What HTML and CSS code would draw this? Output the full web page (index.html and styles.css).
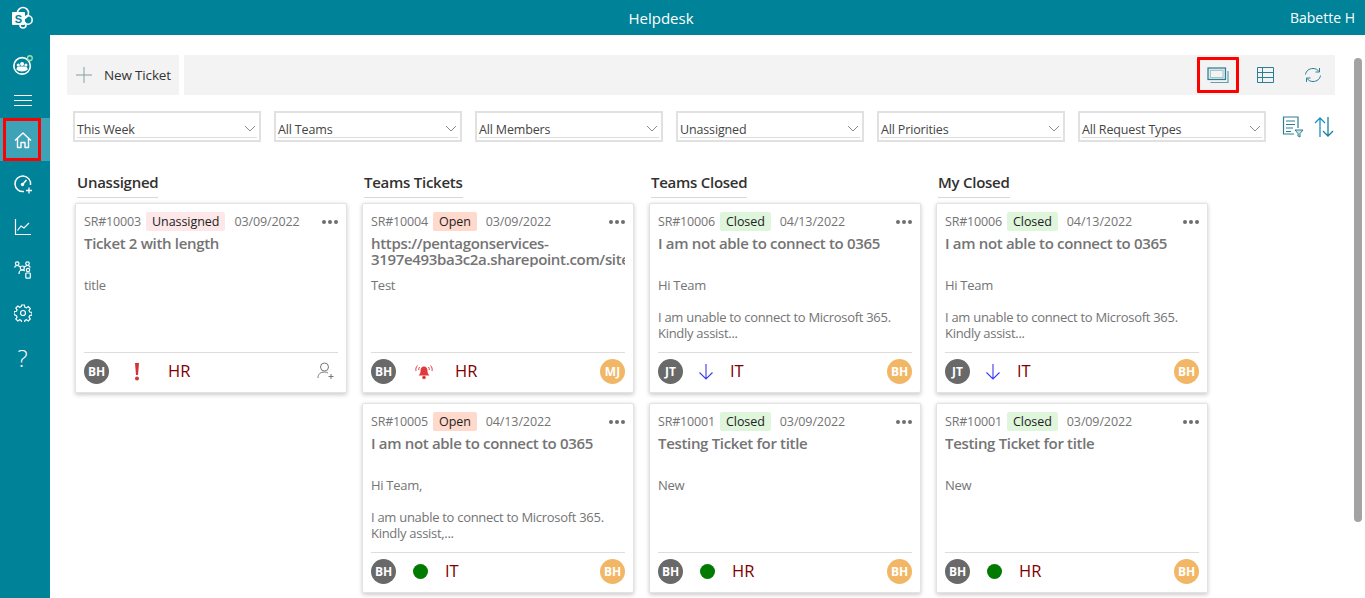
FILE: index.html
```html
<!DOCTYPE html>
<html lang="en">
<head>
<meta charset="utf-8">
<title>Helpdesk</title>
<link rel="stylesheet" href="styles.css">
</head>
<body>
<svg class="defs" width="0" height="0">
<defs>
<symbol id="more" viewBox="0 0 16 4"><circle cx="2" cy="2" r="2"/><circle cx="8" cy="2" r="2"/><circle cx="14" cy="2" r="2"/></symbol>
<symbol id="bang" viewBox="0 0 8 18"><path d="M2 0h4l-1 12H3z" fill="#d13438"/><circle cx="4" cy="15.500" r="2" fill="#d13438"/></symbol>
<symbol id="bell" viewBox="0 0 20 16"><path d="M10 2.500c-2.500 0-3.500 2-3.500 4.500 0 2-1 3.500-2 4.500h11c-1-1-2-2.500-2-4.500 0-2.500-1-4.500-3.500-4.500z" fill="#e03a3e"/><circle cx="10" cy="13.500" r="1.800" fill="#e03a3e"/><path d="M3.500 1.500C2 3 1.500 5 2 7M5.500 3C4.800 4 4.600 5 4.800 6M16.500 1.500C18 3 18.500 5 18 7M14.500 3c.7 1 .9 2 .7 3" fill="none" stroke="#e03a3e"/></symbol>
<symbol id="down" viewBox="0 0 16 18"><path d="M8 1v15M1.500 9.500 8 16l6.500-6.500" fill="none" stroke="#3b3bf0" stroke-width="1.100"/></symbol>
<symbol id="assign" viewBox="0 0 18 18"><circle cx="7.500" cy="5" r="4" fill="none" stroke="#777"/><path d="M1 16c0-4 2.500-6 6.500-6 1.500 0 2.500.3 3.500 1" fill="none" stroke="#777"/><path d="M14 12v5M11.500 14.500h5" stroke="#777" fill="none"/></symbol>
<symbol id="chev" viewBox="0 0 12 7"><path d="M1 1l5 5 5-5" fill="none" stroke="#8a8a8a"/></symbol>
</defs>
</svg>

<header class="topbar">
  <svg class="logo" viewBox="0 0 24 24" width="24" height="24"><circle cx="13" cy="7" r="5.500" fill="none" stroke="#fff" stroke-width="1.600"/><circle cx="18" cy="14" r="4.200" fill="none" stroke="#fff" stroke-width="1.600"/><circle cx="13" cy="19" r="3" fill="none" stroke="#fff" stroke-width="1.600"/><rect x="2" y="6" width="13" height="13" rx="1" fill="#fff"/><text x="8.500" y="16.500" class="logo-s">S</text></svg>
  <div class="app-title">Helpdesk</div>
  <div class="user">Babette H</div>
</header>

<div class="layout">
  <nav class="sidebar">
    <div class="nav-logo">
      <svg viewBox="0 0 24 24" width="22" height="22"><circle cx="11" cy="13" r="9" fill="none" stroke="#fff" stroke-width="1.800"/><circle cx="11" cy="11" r="2.200" fill="#fff"/><circle cx="6.800" cy="12" r="1.700" fill="#fff"/><circle cx="15.200" cy="12" r="1.700" fill="#fff"/><path d="M4.800 17c0-2.500 1.500-3.500 3-3.500h6.400c1.500 0 3 1 3 3.500-1.500 1.500-3.500 2-6.200 2s-4.700-.5-6.200-2z" fill="#fff"/><circle cx="19.500" cy="4.500" r="2.600" fill="#008299" stroke="#9be2a8" stroke-width="1.400"/></svg>
    </div>
    <div class="nav-menu"><span></span><span></span><span></span></div>
    <div class="nav-active">
      <svg viewBox="0 0 18 18" width="18" height="18"><path d="M1 9.500 9 2l8 7.500M3.500 7.500V16.500h3.500v-5h4v5h3.500V7.500" fill="none" stroke="#fff" stroke-width="1.400" stroke-linejoin="round"/></svg>
      <div class="red-box side"></div>
    </div>
    <div class="nav-item">
      <svg viewBox="0 0 20 20" width="20" height="20"><path d="M11 17.500A7.800 7.800 0 1 1 17.500 11" fill="none" stroke="#fff" stroke-width="1.500"/><path d="M9.500 10.500 13.500 6" stroke="#fff" stroke-width="1.600"/><circle cx="9.500" cy="10.500" r="1.700" fill="#fff"/><path d="M16 13.500v6M13 16.500h6" stroke="#fff" stroke-width="1.300"/></svg>
    </div>
    <div class="nav-item">
      <svg viewBox="0 0 18 18" width="18" height="18"><path d="M1.500 1v15.500H17" fill="none" stroke="#fff" stroke-width="1.200"/><path d="M3.500 12.500 7 8l3 2 5-5" fill="none" stroke="#fff" stroke-width="1.200"/></svg>
    </div>
    <div class="nav-item">
      <svg viewBox="0 0 18 18" width="18" height="18"><g fill="none" stroke="#fff" stroke-width="1.200"><circle cx="3.200" cy="2.600" r="1.800"/><circle cx="13.500" cy="2.600" r="1.800"/><circle cx="8.300" cy="7" r="2"/><circle cx="14" cy="9" r="1.700"/><path d="M.5 6.500C1 5 2 4.500 3.200 4.500c1.300 0 2.300 1 3.500 1.500M16.300 6.500c-.5-1.500-1.500-2-2.800-2-1.300 0-2.500 1-3.700 1.500M5 13c0-2.500 1.300-4 3.300-4 1 0 1.800.3 2.500 1"/><rect x="11.800" y="12" width="4.500" height="5.200" rx=".8"/></g></svg>
    </div>
    <div class="nav-item">
      <svg viewBox="0 0 18 18" width="18" height="18"><g fill="none" stroke="#fff" stroke-width="1.200"><circle cx="9" cy="9" r="2.500"/><path d="M7.600 1h2.800l.4 2.200 1.500.7L14.300 2.600l2 2-1.300 1.900.7 1.500 2.300.4v2.800l-2.300.4-.7 1.500 1.300 1.900-2 2-1.900-1.300-1.500.7-.4 2.200H7.600l-.4-2.200-1.500-.7-1.900 1.300-2-2 1.300-1.900-.7-1.500L0 10.500V7.700l2.400-.4.700-1.500L1.800 4l2-2 1.900 1.300 1.500-.7z"/></g></svg>
    </div>
    <div class="nav-help">?</div>
  </nav>

  <main class="content">
    <div class="toolbar">
      <button class="new-ticket">
        <svg viewBox="0 0 16 16" width="16" height="16"><path d="M8 0v16" stroke="#7aa7a0" fill="none"/><path d="M0 8h16" stroke="#8a9aa0" fill="none"/></svg>
        <span>New Ticket</span>
      </button>
      <div class="tool-icons">
        <div class="tool">
          <svg viewBox="0 0 22 17" width="22" height="17"><rect x="1" y="1" width="17.500" height="11.500" fill="#d6e6ea" stroke="#2b7f92" stroke-width="1.200"/><path d="M3.500 15.500h17.500V4" fill="none" stroke="#5ea0b0" stroke-width="1.200"/><path d="M3.500 3.500h12.500v7H3.500z" fill="#f3f3f3" stroke="#8aa" stroke-width=".6"/></svg>
          <div class="red-box top"></div>
        </div>
        <div class="tool">
          <svg viewBox="0 0 17 16" width="17" height="16"><path d="M.5.500h16v15H.5zM.5 5.500h16M.5 10.500h16M5.500.500v15" fill="none" stroke="#2b7f92"/></svg>
        </div>
        <div class="tool">
          <svg viewBox="0 0 18 16" width="18" height="16"><path d="M1.500 7.500C2 4 5 1.500 9 1.500c2.500 0 4.500 1 6 3M16.500 8.500c-.5 3.500-3.500 6-7.500 6-2.500 0-4.500-1-6-3" fill="none" stroke="#2b7f92"/><path d="M15.500 1v4h-4M2.500 15v-4h4" fill="none" stroke="#2b7f92"/></svg>
        </div>
      </div>
    </div>

    <div class="filters">
      <div class="filter"><div class="filter-inner"><span>This Week</span><svg class="chev"><use href="#chev"/></svg></div></div>
      <div class="filter"><div class="filter-inner"><span>All Teams</span><svg class="chev"><use href="#chev"/></svg></div></div>
      <div class="filter"><div class="filter-inner"><span>All Members</span><svg class="chev"><use href="#chev"/></svg></div></div>
      <div class="filter"><div class="filter-inner"><span>Unassigned</span><svg class="chev"><use href="#chev"/></svg></div></div>
      <div class="filter"><div class="filter-inner"><span>All Priorities</span><svg class="chev"><use href="#chev"/></svg></div></div>
      <div class="filter"><div class="filter-inner"><span>All Request Types</span><svg class="chev"><use href="#chev"/></svg></div></div>
      <div class="filter-tools">
        <svg viewBox="0 0 22 22" width="22" height="22"><path d="M12 18H1.500V1h14.500v11" fill="none" stroke="#2b7f92" stroke-width="1.200"/><path d="M4 5h9M4 8.500h9M4 12h7M4 15.500h5" stroke="#2b7f92"/><path d="M13 14h8l-3 3.500V21l-2-1v-2.500z" fill="#cfe3e8" stroke="#2b7f92"/></svg>
        <svg viewBox="0 0 20 22" width="20" height="22"><path d="M6 21V2M1 7l5-5 5 5" fill="none" stroke="#1f8fc0" stroke-width="1.300"/><path d="M14 1v19M9 15l5 5 5-5" fill="none" stroke="#1f7f98" stroke-width="1.300"/></svg>
      </div>
    </div>

    <div class="board">
      <section class="column">
        <h2 class="col-title"><span>Unassigned</span></h2>
        <article class="card">
          <div class="card-head"><span class="sr">SR#10003</span><span class="badge b-unassigned">Unassigned</span><span class="date">03/09/2022</span><svg class="more"><use href="#more"/></svg></div>
          <h3 class="card-title">Ticket 2 with length</h3>
          <div class="card-body"><p>title</p></div>
          <div class="card-foot"><span class="avatar grey">BH</span><span class="prio p-bang"><svg width="8" height="18"><use href="#bang"/></svg></span><span class="team t-wide">HR</span><svg class="assign" width="18" height="18"><use href="#assign"/></svg></div>
        </article>
      </section>

      <section class="column">
        <h2 class="col-title"><span>Teams Tickets</span></h2>
        <article class="card">
          <div class="card-head"><span class="sr">SR#10004</span><span class="badge b-open">Open</span><span class="date">03/09/2022</span><svg class="more"><use href="#more"/></svg></div>
          <h3 class="card-title">https://pentagonservices-<br>3197e493ba3c2a.sharepoint.com/sites</h3>
          <div class="card-body"><p>Test</p></div>
          <div class="card-foot"><span class="avatar grey">BH</span><span class="prio p-bang"><svg width="20" height="16"><use href="#bell"/></svg></span><span class="team t-wide">HR</span><span class="avatar orange">MJ</span></div>
        </article>
        <article class="card">
          <div class="card-head"><span class="sr">SR#10005</span><span class="badge b-open">Open</span><span class="date">04/13/2022</span><svg class="more"><use href="#more"/></svg></div>
          <h3 class="card-title">I am not able to connect to 0365</h3>
          <div class="card-body"><p>Hi Team,</p><p class="gap">I am unable to connect to Microsoft 365.<br>Kindly assist,...</p></div>
          <div class="card-foot"><span class="avatar grey">BH</span><span class="prio p-dot"><i class="dot"></i></span><span class="team t-narrow">IT</span><span class="avatar orange">BH</span></div>
        </article>
      </section>

      <section class="column">
        <h2 class="col-title"><span>Teams Closed</span></h2>
        <article class="card">
          <div class="card-head"><span class="sr">SR#10006</span><span class="badge b-closed">Closed</span><span class="date">04/13/2022</span><svg class="more"><use href="#more"/></svg></div>
          <h3 class="card-title">I am not able to connect to 0365</h3>
          <div class="card-body"><p>Hi Team</p><p class="gap">I am unable to connect to Microsoft 365.<br>Kindly assist...</p></div>
          <div class="card-foot"><span class="avatar grey">JT</span><span class="prio p-down"><svg width="16" height="18"><use href="#down"/></svg></span><span class="team t-down">IT</span><span class="avatar orange">BH</span></div>
        </article>
        <article class="card">
          <div class="card-head"><span class="sr">SR#10001</span><span class="badge b-closed">Closed</span><span class="date">03/09/2022</span><svg class="more"><use href="#more"/></svg></div>
          <h3 class="card-title">Testing Ticket for title</h3>
          <div class="card-body"><p>New</p></div>
          <div class="card-foot"><span class="avatar grey">BH</span><span class="prio p-dot"><i class="dot"></i></span><span class="team t-narrow">HR</span><span class="avatar orange">BH</span></div>
        </article>
      </section>

      <section class="column">
        <h2 class="col-title"><span>My Closed</span></h2>
        <article class="card">
          <div class="card-head"><span class="sr">SR#10006</span><span class="badge b-closed">Closed</span><span class="date">04/13/2022</span><svg class="more"><use href="#more"/></svg></div>
          <h3 class="card-title">I am not able to connect to 0365</h3>
          <div class="card-body"><p>Hi Team</p><p class="gap">I am unable to connect to Microsoft 365.<br>Kindly assist...</p></div>
          <div class="card-foot"><span class="avatar grey">JT</span><span class="prio p-down"><svg width="16" height="18"><use href="#down"/></svg></span><span class="team t-down">IT</span><span class="avatar orange">BH</span></div>
        </article>
        <article class="card">
          <div class="card-head"><span class="sr">SR#10001</span><span class="badge b-closed">Closed</span><span class="date">03/09/2022</span><svg class="more"><use href="#more"/></svg></div>
          <h3 class="card-title">Testing Ticket for title</h3>
          <div class="card-body"><p>New</p></div>
          <div class="card-foot"><span class="avatar grey">BH</span><span class="prio p-dot"><i class="dot"></i></span><span class="team t-narrow">HR</span><span class="avatar orange">BH</span></div>
        </article>
      </section>
    </div>
    <div class="scroll-thumb"></div>
  </main>
</div>
</body>
</html>
```
FILE: styles.css
```css
* { box-sizing: border-box; }
html, body { height: 100%; }
body {
  margin: 0;
  overflow: hidden;
  display: flex;
  flex-direction: column;
  background: #fff;
  font-family: "Open Sans", "Noto Sans", "Liberation Sans", sans-serif;
  font-size: 12px;
  color: #333;
}
.defs { position: absolute; }

.topbar {
  flex: 0 0 35px;
  display: flex;
  align-items: center;
  background: #008299;
  color: #fff;
  position: relative;
}
.logo { margin-left: 10px; }
.logo-s { font: bold 11px "Liberation Sans", sans-serif; fill: #008299; text-anchor: middle; }
.app-title {
  position: absolute;
  left: 0;
  right: 0;
  text-align: center;
  font-size: 15px;
  padding-right: 43px;
  pointer-events: none;
}
.user { margin-left: auto; padding-right: 10px; font-size: 14px; }

.layout { flex: 1; display: flex; min-height: 0; }
.sidebar {
  flex: 0 0 50px;
  background: #008299;
  display: flex;
  flex-direction: column;
  align-items: stretch;
  padding-top: 16px;
}
.nav-item, .nav-active, .nav-logo, .nav-help {
  display: flex;
  align-items: center;
  justify-content: center;
  padding-right: 5px;
  position: relative;
}
.nav-item { height: 43px; padding-top: 2px; }
.nav-active { height: 43px; background: #3fa3b8; }
.nav-logo { height: 28px; }
.nav-menu {
  height: 39px;
  display: flex;
  flex-direction: column;
  align-items: center;
  justify-content: center;
  gap: 4px;
  padding: 4px 5px 0 0;
}
.nav-menu span { display: block; width: 18px; height: 1px; background: #fff; }
.nav-help { color: #fff; font: 300 24px "Open Sans", sans-serif; height: 46px; padding-top: 2px; }
.red-box { position: absolute; border: 3px solid #f00; pointer-events: none; }
.red-box.side { left: 3px; top: 0; width: 38px; height: 43px; }
.red-box.top { left: 0; top: 0; width: 42px; height: 36px; border-radius: 1px; }

.content {
  flex: 1;
  min-width: 0;
  padding: 20px 30px 0 17px;
  position: relative;
}
.toolbar { display: flex; gap: 5px; height: 40px; }
.new-ticket {
  flex: 0 0 112px;
  display: flex;
  align-items: center;
  gap: 12px;
  padding: 0 4px 0 9px;
  border: 0;
  background: #f3f3f3;
  font: 13.500px "Open Sans", sans-serif;
  color: #333;
  letter-spacing: -.16px;
  white-space: nowrap;
}
.tool-icons {
  flex: 1;
  display: flex;
  justify-content: flex-end;
  align-items: center;
  gap: 5.500px;
  background: #f3f3f3;
  padding-right: 1px;
}
.tool {
  width: 42px;
  height: 36px;
  display: flex;
  align-items: center;
  justify-content: center;
  position: relative;
}

.filters {
  display: flex;
  align-items: center;
  margin: 16px 0 0 6px;
  gap: 13px;
}
.filter {
  flex: 0 0 188px;
  height: 31px;
  border: 2px solid #e1e1e1;
  padding: 0 2px 2px 2px;
  display: flex;
  align-items: flex-end;
  font-size: 12.500px;
  letter-spacing: -.15px;
  color: #444;
}
.filter-inner {
  flex: 1;
  display: flex;
  align-items: center;
  justify-content: space-between;
  border-bottom: 1px solid #ddd;
  height: 20px;
  padding-right: 1px;
}
.filter-inner span { line-height: 18px; padding-top: 4px; }
.chev { width: 12px; height: 7px; margin-top: 2px; }
.filter-tools { margin-left: 3px; display: flex; gap: 10px; align-items: center; }

.board { display: flex; gap: 15px; margin: 28px 0 0 8px; align-items: flex-start; }
.column { flex: 0 0 272px; min-width: 0; display: flex; flex-direction: column; gap: 10px; }
.col-title {
  margin: 0 0 -5px;
  font-size: 15px;
  font-weight: 600;
  height: 28px;
  padding-left: 2px;
  color: #323130;
  letter-spacing: -.26px;
}
.col-title span { display: inline-block; border-bottom: 1px solid #d8d8d8; height: 28px; line-height: 25px; }

.card {
  height: 190px;
  background: #fff;
  border: 1px solid #e3e3e3;
  border-radius: 2px;
  box-shadow: 0 1.600px 4px rgba(0,0,0,.2);
  padding: 7px 8px 0 8px;
  display: flex;
  flex-direction: column;
  color: #747474;
}
.card-head { display: flex; align-items: center; height: 20px; font-size: 12.500px; flex: none; }
.sr { margin-right: 5px; letter-spacing: -.18px; }
.date { letter-spacing: -.12px; }
.badge { padding: 0 6px; border-radius: 2px; height: 19px; line-height: 19px; color: #222; margin-right: 9px; letter-spacing: -.05px; }
.b-unassigned { background: #fde7e9; }
.b-open { background: #fed9cc; }
.b-closed { background: #dff6dd; }
.more { width: 16px; height: 4px; margin: 2px 0 0 auto; fill: #6e6e6e; }
.card-title {
  margin: 4px 0 0;
  font-size: 15px;
  line-height: 16px;
  font-weight: 600;
  height: 32px;
  color: #747474;
  letter-spacing: -.33px;
  white-space: nowrap;
  overflow: hidden;
  flex: none;
}
.card-body { flex: 1; margin-top: 10px; font-size: 13px; line-height: 16px; letter-spacing: -.29px; }
.card-body p { margin: 0; }
.card-body .gap { margin-top: 16px; }
.card-foot {
  flex: none;
  height: 40px;
  border-top: 1px solid #ddd;
  display: flex;
  align-items: flex-start;
  padding-top: 6px;
}
.avatar {
  width: 25px;
  height: 25px;
  border-radius: 50%;
  display: flex;
  align-items: center;
  justify-content: center;
  color: #fff;
  font-size: 12px;
  font-weight: 700;
  flex: none;
}
.grey { background: #696969; }
.orange { background: #f2b766; margin-left: auto; }
.prio { display: flex; align-items: center; justify-content: center; width: 30px; height: 25px; flex: none; }
.p-bang { margin-left: 13px; }
.p-dot { margin-left: 9px; }
.p-down { margin-left: 8px; }
.dot { display: block; width: 15px; height: 15px; border-radius: 50%; background: #007a00; }
.team { font-size: 16.500px; line-height: 23px; color: #800000; }
.t-wide { margin-left: 16px; }
.t-narrow { margin-left: 10px; }
.t-down { margin-left: 9px; }
.assign { margin: 3px 3px 0 auto; }

.scroll-thumb {
  position: absolute;
  right: 3px;
  top: 23px;
  width: 8px;
  height: 464px;
  background: #a3a3a3;
  border-radius: 4px;
}
```
